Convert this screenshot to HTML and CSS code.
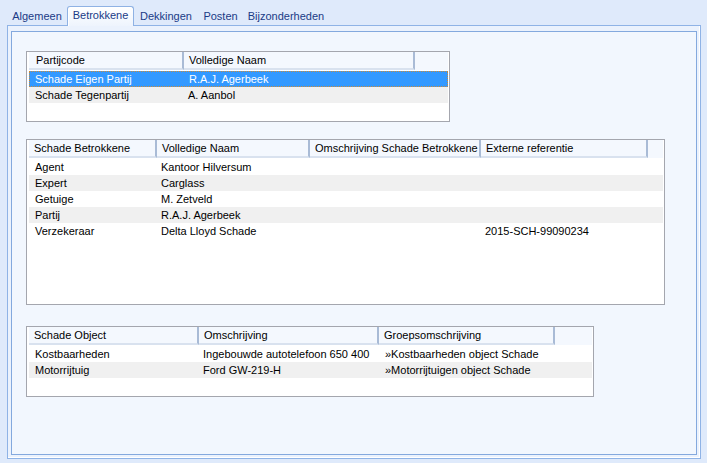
FILE: index.html
```html
<!DOCTYPE html>
<html>
<head>
<meta charset="utf-8">
<link rel="stylesheet" href="styles.css">
</head>
<body>
<div class="tabs">
  <div class="tab t1">Algemeen</div>
  <div class="tab t2 active">Betrokkene</div>
  <div class="tab t3">Dekkingen</div>
  <div class="tab t4">Posten</div>
  <div class="tab t5">Bijzonderheden</div>
</div>
<div class="panel">
  <div class="inner">
    <div class="box box1">
      <div class="hdr cols1">
        <div class="hc">Partijcode</div>
        <div class="hc">Volledige Naam</div>
      </div>
      <div class="row cols1 sel"><div>Schade Eigen Partij</div><div>R.A.J. Agerbeek</div></div>
      <div class="row cols1 alt"><div>Schade Tegenpartij</div><div>A. Aanbol</div></div>
    </div>

    <div class="box box2">
      <div class="hdr cols2">
        <div class="hc">Schade Betrokkene</div>
        <div class="hc">Volledige Naam</div>
        <div class="hc">Omschrijving Schade Betrokkene</div>
        <div class="hc">Externe referentie</div>
      </div>
      <div class="row cols2"><div>Agent</div><div>Kantoor Hilversum</div><div></div><div></div></div>
      <div class="row cols2 alt"><div>Expert</div><div>Carglass</div><div></div><div></div></div>
      <div class="row cols2"><div>Getuige</div><div>M. Zetveld</div><div></div><div></div></div>
      <div class="row cols2 alt"><div>Partij</div><div>R.A.J. Agerbeek</div><div></div><div></div></div>
      <div class="row cols2"><div>Verzekeraar</div><div>Delta Lloyd Schade</div><div></div><div>2015-SCH-99090234</div></div>
    </div>

    <div class="box box3">
      <div class="hdr cols3">
        <div class="hc">Schade Object</div>
        <div class="hc">Omschrijving</div>
        <div class="hc">Groepsomschrijving</div>
      </div>
      <div class="row cols3"><div>Kostbaarheden</div><div>Ingebouwde autotelefoon 650 400</div><div>»Kostbaarheden object Schade</div></div>
      <div class="row cols3 alt"><div>Motorrijtuig</div><div>Ford GW-219-H</div><div>»Motorrijtuigen object Schade</div></div>
    </div>
  </div>
</div>
</body>
</html>
```
FILE: styles.css
```css
html, body {
  margin: 0;
  padding: 0;
}
body {
  background: #dfeafb;
  font-family: "Liberation Sans", Arial, sans-serif;
  font-size: 11px;
  color: #000;
  width: 707px;
  height: 463px;
  overflow: hidden;
}
.tabs {
  display: flex;
  align-items: flex-end;
  height: 25px;
  padding-left: 7px;
}
.tab {
  color: #1a3a86;
  text-align: center;
  height: 18px;
  line-height: 18px;
  box-sizing: border-box;
}
.t1 { width: 60px; }
.t2 { width: 67px; }
.t3 { width: 64px; }
.t4 { width: 45px; }
.t5 { width: 86px; }
.tab.active {
  height: 20px;
  line-height: 16px;
  margin-bottom: -1px;
  position: relative;
  z-index: 1;
  border: 1px solid #8fb2e4;
  border-bottom: none;
  border-radius: 3px 3px 0 0;
  background: linear-gradient(#ffffff, #eef4fd);
  box-shadow: inset 1px 1px 0 #ffffff;
}
.panel {
  margin-left: 7px;
  width: 694px;
  height: 434px;
  box-sizing: border-box;
  border: 1px solid #8fb3e6;
  box-shadow: inset -1px -1px 0 #ffffff;
  background: #ebf2fd;
  padding: 5px 3px 3px 3px;
}
.inner {
  height: 100%;
  box-sizing: border-box;
  border: 1px solid #84a9de;
  background: #f2f7fe;
  padding-top: 19px;
  padding-left: 14px;
  display: flex;
  flex-direction: column;
}
.box {
  box-sizing: border-box;
  border: 1px solid #a4a6ae;
  background: #ffffff;
  padding: 0 1px 0 2px;
}
.box1 { width: 424px; height: 71px; }
.box2 { width: 639px; height: 166px; margin-top: 17px; }
.box3 { width: 568px; height: 71px; margin-top: 21px; }

.hdr {
  display: grid;
  height: 18px;
  background: #f4f8fe;
  margin-bottom: 1px;
}
.hc {
  box-sizing: border-box;
  height: 18px;
  line-height: 16px;
  padding-left: 5px;
  border-right: 2px solid #a9bbd6;
  border-bottom: 2px solid #d9e2ef;
  white-space: nowrap;
  overflow: hidden;
}
.cols1 { grid-template-columns: 155px 231px; }
.cols2 { grid-template-columns: 128px 153px 171px 167px; }
.cols3 { grid-template-columns: 170px 180px 176px; }
.cols1 .hc:first-child { padding-left: 7px; }

.row {
  display: grid;
  height: 16px;
  line-height: 16px;
  box-sizing: border-box;
}
.row > div {
  padding-left: 4px;
  white-space: nowrap;
  overflow: hidden;
}
.row > div:first-child { padding-left: 6px; }
.cols3.row > div:nth-child(3) { padding-left: 6px; }
.row.alt { background: #f0f0f0; }
.row.sel {
  background: #3399ff;
  color: #ffffff;
  border: 1px dotted #c98a3a;
  line-height: 14px;
}
.row.sel > div:first-child { padding-left: 5px; }
```
